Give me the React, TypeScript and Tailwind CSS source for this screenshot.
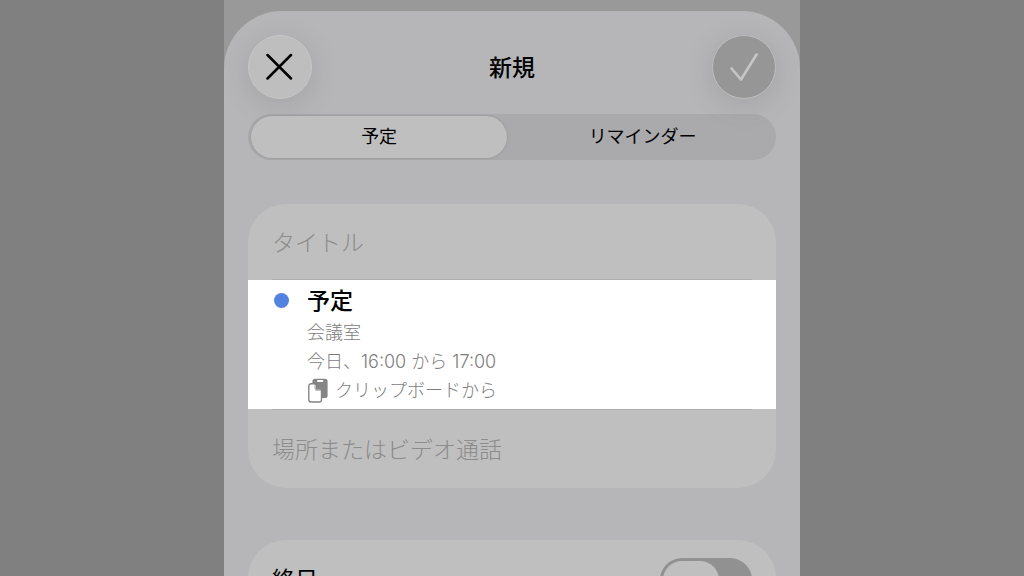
import { useState } from "react";
import clsx from "clsx";

const tabs = ["予定", "リマインダー"];

function ClipboardIcon() {
  return (
    <svg width="22" height="26" viewBox="0 0 22 26" fill="none" aria-hidden="true">
      <path
        d="M8 .8h10a2.600 2.600 0 0 1 2.600 2.600V17.400A2.600 2.600 0 0 1 18 20H15V13L8.500 6H5.400V3.400A2.600 2.600 0 0 1 8 .8Z"
        fill="#858585"
      />
      <rect x="10" y="2" width="6.400" height="2" rx="1" fill="#fff" />
      <path
        d="M4 5.800h4.200L14.500 12v9.800a2.200 2.200 0 0 1-2.200 2.200H4a2.200 2.200 0 0 1-2.200-2.200V8A2.200 2.200 0 0 1 4 5.800Z"
        fill="#fff"
        stroke="#858585"
        strokeWidth="1.400"
      />
      <path d="M8.200 5.800v4.700c0 1 .6 1.600 1.500 1.600h4.800Z" fill="#858585" stroke="#858585" strokeWidth="1.200" />
      <path d="M8.200 7v3.600c0 .9.500 1.400 1.400 1.400h4" stroke="#fff" strokeWidth=".6" />
    </svg>
  );
}

function Suggestion() {
  return (
    <button
      type="button"
      className="flex w-full items-start bg-white pt-1 pr-6 pb-1 pl-[26px] text-left"
    >
      <span className="mt-[9px] mr-[18px] size-[15px] shrink-0 rounded-full bg-[#5382e0]" />
      <span className="flex flex-col text-lg leading-[29px] font-light text-[#7c7c7c]">
        <span className="text-[23px] leading-[34px] font-medium text-black">予定</span>
        <span>会議室</span>
        <span>今日、16:00 から 17:00</span>
        <span className="flex items-center gap-[6px]">
          <ClipboardIcon />
          クリップボードから
        </span>
      </span>
    </button>
  );
}

export default function App() {
  const [tab, setTab] = useState(tabs[0]);
  const [title, setTitle] = useState("");
  const [location, setLocation] = useState("");
  const [allDay, setAllDay] = useState(false);

  return (
    <div className="flex h-screen justify-center overflow-hidden bg-[#808080] font-[Inter,'Noto_Sans_CJK_JP',sans-serif] text-black">
      <main className="w-full max-w-xl bg-[#999999] pt-[11px]">
        <div className="h-full overflow-hidden rounded-t-[58px] bg-[#b6b6b8] px-6 pt-6">
          <header className="flex items-center justify-between">
            <button
              type="button"
              aria-label="閉じる"
              className="flex size-16 items-center justify-center rounded-full border border-[#c6c6c6] bg-[#bebebe] shadow-[0_6px_28px_rgba(90,90,100,0.2)]"
            >
              <svg width="28" height="28" viewBox="0 0 28 28" fill="none" aria-hidden="true">
                <path d="M1.500 2l23.500 23.500M25 2L1.500 25.500" stroke="#000" strokeWidth="2.500" strokeLinecap="round" />
              </svg>
            </button>
            <h1 className="pt-0.5 text-[23px] leading-8 font-medium">新規</h1>
            <button
              type="button"
              aria-label="追加"
              className="flex size-16 items-center justify-center rounded-full border border-[#bcbcbc] bg-[#969696] shadow-[0_6px_28px_rgba(90,90,100,0.2)]"
            >
              <svg width="30" height="30" viewBox="0 0 30 30" fill="none" aria-hidden="true">
                <path d="M2.500 16.500L12 27.500L27.500 2.500" stroke="#c6c6c6" strokeWidth="2.600" strokeLinecap="round" strokeLinejoin="round" />
              </svg>
            </button>
          </header>

          <div role="tablist" className="mt-[15px] flex h-[46px] rounded-full bg-[#aaaaac] py-0.5 pr-0.5 pl-[3px]">
            {tabs.map((t) => (
              <button
                key={t}
                type="button"
                role="tab"
                aria-selected={tab === t}
                onClick={() => setTab(t)}
                className={clsx(
                  "rounded-full text-lg leading-6 first:w-[49%] last:ml-1 last:flex-1",
                  tab === t && "bg-[#bfbfbf] shadow-[0_0_3px_rgba(0,0,0,0.15)]"
                )}
              >
                {t}
              </button>
            ))}
          </div>

          <section className="mt-11 overflow-hidden rounded-[38px] bg-[#bfbfbf]">
            <input
              type="text"
              aria-label="タイトル"
              placeholder="タイトル"
              value={title}
              onChange={(e) => setTitle(e.target.value)}
              className="block h-[75px] w-full px-6 pt-0.5 text-[23px] placeholder:font-light placeholder:text-[#8c8c8c] focus:outline-none"
            />
            <div className="mx-6 h-px bg-[#adadad]" />
            <Suggestion />
            <div className="mx-6 h-px bg-[#adadad]" />
            <input
              type="text"
              aria-label="場所またはビデオ通話"
              placeholder="場所またはビデオ通話"
              value={location}
              onChange={(e) => setLocation(e.target.value)}
              className="block h-[78px] w-full px-6 pt-0.5 text-[23px] placeholder:font-light placeholder:text-[#8c8c8c] focus:outline-none"
            />
          </section>

          <section className="mt-[52px] rounded-[38px] bg-[#bfbfbf]">
            <label className="flex h-20 items-center justify-between px-6 text-[23px]">
              終日
              <input
                type="checkbox"
                role="switch"
                checked={allDay}
                onChange={(e) => setAllDay(e.target.checked)}
                className="flex h-11 w-[92px] appearance-none items-center rounded-full bg-[#919191] px-[3px] before:h-[38px] before:w-14 before:rounded-full before:bg-[#bfbfbf] checked:justify-end checked:bg-[#4c9a5f]"
              />
            </label>
          </section>
        </div>
      </main>
    </div>
  );
}
